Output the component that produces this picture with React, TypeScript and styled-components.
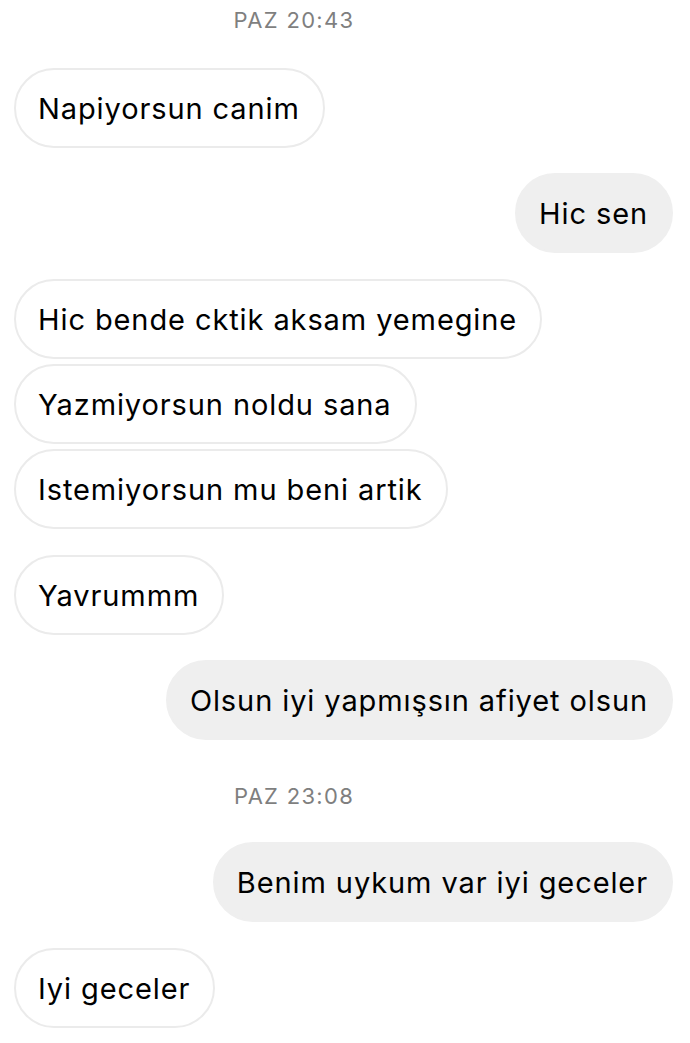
import React from 'react';
import styled, { createGlobalStyle } from 'styled-components';

const GlobalStyle = createGlobalStyle`
  html, body {
    margin: 0;
    padding: 0;
    background: #ffffff;
  }
  body {
    font-family: Inter, "Liberation Sans", Arial, sans-serif;
    -webkit-font-smoothing: antialiased;
  }
`;

type Side = 'in' | 'out';

const Thread = styled.div`
  display: flex;
  flex-direction: column;
  padding: 0 17px 0 14px;
  width: 690px;
  box-sizing: border-box;
`;

const Stamp = styled.div<{ $top: number; $bottom: number }>`
  height: 40px;
  display: flex;
  align-items: center;
  justify-content: center;
  padding-right: 99px;
  margin-top: ${({ $top }) => $top}px;
  margin-bottom: ${({ $bottom }) => $bottom}px;
  font-size: 22px;
  color: #7f7f7f;
  letter-spacing: 1.3px;
`;

const Row = styled.div<{ $side: Side; $gap: number }>`
  display: flex;
  justify-content: ${({ $side }) => ($side === 'out' ? 'flex-end' : 'flex-start')};
  margin-top: ${({ $gap }) => $gap}px;
`;

const Bubble = styled.div<{ $side: Side }>`
  height: 80px;
  box-sizing: border-box;
  display: flex;
  align-items: center;
  padding: 0 23px 0 22px;
  border-radius: 40px;
  font-size: 29px;
  letter-spacing: 0.9px;
  color: #000000;
  white-space: nowrap;
  background: ${({ $side }) => ($side === 'out' ? '#efefef' : '#ffffff')};
  border: 2px solid ${({ $side }) => ($side === 'out' ? '#efefef' : '#ebebeb')};
`;

type Item =
  | { kind: 'stamp'; text: string; top: number; bottom: number }
  | { kind: 'msg'; side: Side; text: string; gap: number };

const items: Item[] = [
  { kind: 'stamp', text: 'PAZ 20:43', top: 0, bottom: 28 },
  { kind: 'msg', side: 'in', text: 'Napiyorsun canim', gap: 0 },
  { kind: 'msg', side: 'out', text: 'Hic sen', gap: 25 },
  { kind: 'msg', side: 'in', text: 'Hic bende cktik aksam yemegine', gap: 26 },
  { kind: 'msg', side: 'in', text: 'Yazmiyorsun noldu sana', gap: 5 },
  { kind: 'msg', side: 'in', text: 'Istemiyorsun mu beni artik', gap: 5 },
  { kind: 'msg', side: 'in', text: 'Yavrummm', gap: 26 },
  { kind: 'msg', side: 'out', text: 'Olsun iyi yapmışsın afiyet olsun', gap: 25 },
  { kind: 'stamp', text: 'PAZ 23:08', top: 36, bottom: 26 },
  { kind: 'msg', side: 'out', text: 'Benim uykum var iyi geceler', gap: 0 },
  { kind: 'msg', side: 'in', text: 'Iyi geceler', gap: 26 },
];

const App: React.FC = () => (
  <>
    <GlobalStyle />
    <Thread>
      {items.map((item, i) =>
        item.kind === 'stamp' ? (
          <Stamp key={i} $top={item.top} $bottom={item.bottom}>
            {item.text}
          </Stamp>
        ) : (
          <Row key={i} $side={item.side} $gap={item.gap}>
            <Bubble $side={item.side}>{item.text}</Bubble>
          </Row>
        )
      )}
    </Thread>
  </>
);

export default App;
